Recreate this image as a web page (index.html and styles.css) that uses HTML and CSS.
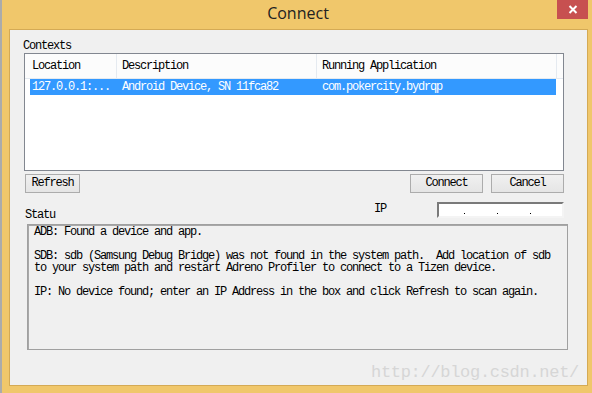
FILE: index.html
```html
<!DOCTYPE html>
<html>
<head>
<meta charset="utf-8">
<link rel="stylesheet" href="styles.css">
</head>
<body>
<div class="strip"></div>
<div class="window">
  <div class="titlebar">
    <div class="title">Connect</div>
    <div class="close">
      <svg width="10" height="9" viewBox="0 0 10 9"><path d="M1.5 1 L8.5 8 M8.5 1 L1.5 8" stroke="#fff" stroke-width="2" fill="none"/></svg>
    </div>
  </div>
  <div class="client">
    <div class="mono label-contexts">Contexts</div>
    <div class="list">
      <div class="lv-header">
        <div class="hcell h1 mono">Location</div>
        <div class="hcell h2 mono">Description</div>
        <div class="hcell h3 mono">Running Application</div>
        <div class="hfill"></div>
      </div>
      <div class="lv-row selected">
        <div class="cell r1 mono">127.0.0.1:...</div>
        <div class="cell r2 mono">Android Device, SN 11fca82</div>
        <div class="cell r3 mono">com.pokercity.bydrqp</div>
      </div>
    </div>
    <div class="btn-row">
      <button class="btn btn-refresh mono">Refresh</button>
      <div class="spacer"></div>
      <button class="btn btn-wide mono">Connect</button>
      <button class="btn btn-wide mono">Cancel</button>
    </div>
    <div class="ip-row">
      <div class="mono statu">Statu</div>
      <div class="spacer"></div>
      <div class="mono ip-label">IP</div>
      <div class="ip-box"><span class="dot"></span><span class="dot"></span><span class="dot"></span></div>
    </div>
    <div class="status mono">ADB: Found a device and app.

SDB: sdb (Samsung Debug Bridge) was not found in the system path.  Add location of sdb
to your system path and restart Adreno Profiler to connect to a Tizen device.

IP: No device found; enter an IP Address in the box and click Refresh to scan again.</div>
  </div>
  <div class="watermark">http://blog.csdn.net/</div>
</div>
</body>
</html>
```

FILE: styles.css
```css
html, body {
  margin: 0;
  padding: 0;
}
body {
  width: 592px;
  height: 393px;
  display: flex;
  background: #f0c76b;
  overflow: hidden;
}
.strip {
  width: 2px;
  background: #ababab;
}
.window {
  position: relative;
  flex: 1;
  display: flex;
  flex-direction: column;
  padding: 0 4px 7px 7px;
}
.titlebar {
  height: 29px;
  display: grid;
  grid-template-columns: 1fr auto 1fr;
  align-items: start;
  margin: 0 -4px 0 -7px;
  padding: 0 4px 0 6px;
}
.title {
  grid-column: 2;
  font-family: "Open Sans", sans-serif;
  font-size: 16px;
  line-height: 26px;
  color: #222;
}
.close {
  grid-column: 3;
  justify-self: end;
  width: 31px;
  height: 19px;
  background: #c75050;
  display: flex;
  align-items: center;
  justify-content: center;
}
.close svg { display: block; margin-left: 1px; }
.client {
  flex: 1;
  background: #f0f0f0;
  border: 1px solid #d4aa55;
  padding-left: 14px;
}
.mono {
  font-family: "Liberation Mono", monospace;
  font-size: 12px;
  letter-spacing: -1.2px;
  line-height: 12px;
  color: #000;
}
.label-contexts {
  margin-top: 10px;
  margin-left: -1px;
}
.list {
  margin-top: 1px;
  width: 538px;
  height: 116px;
  border: 1px solid #828790;
  background: #fff;
}
.lv-header {
  display: flex;
  height: 24px;
  border-bottom: 1px solid #e5eaf0;
  background: #fcfcfc;
}
.hcell {
  border-right: 1px solid #e5eaf0;
  padding-left: 6px;
  line-height: 24px;
  box-sizing: border-box;
}
.h1 { width: 92px; padding-left: 7px; }
.h2 { width: 200px; padding-left: 5px; }
.h3 { width: 240px; padding-left: 5px; }
.hfill { flex: 1; }
.lv-row {
  display: flex;
  margin-left: 5px;
  width: 526px;
  height: 16px;
}
.selected { background: #3399ff; }
.selected .cell { color: #fff; }
.cell {
  line-height: 16px;
  box-sizing: border-box;
  white-space: nowrap;
}
.r1 { width: 87px; padding-left: 2px; }
.r2 { width: 200px; padding-left: 5px; }
.r3 { flex: 1; padding-left: 5px; }
.btn-row {
  margin-top: 3px;
  width: 539px;
  padding-left: 1px;
  display: flex;
  gap: 8px;
}
.spacer { flex: 1; }
.btn {
  height: 19px;
  margin: 0;
  padding: 0;
  border: 1px solid #acacac;
  background: linear-gradient(#f0f0f0, #e5e5e5);
  line-height: 17px;
  text-align: center;
}
.btn-refresh { width: 55px; }
.btn-wide { width: 73px; }
.ip-row {
  margin-top: 9px;
  width: 540px;
  height: 19px;
  display: flex;
  align-items: flex-start;
}
.statu {
  margin-top: 7px;
  margin-left: 1px;
}
.ip-label {
  margin-right: 51px;
  line-height: 12px;
  margin-top: 1px;
}
.ip-box {
  width: 123px;
  height: 12px;
  background: #fff;
  border-top: 2px solid #7a7a7a;
  border-left: 2px solid #7a7a7a;
  border-right: 2px solid #f4f4f4;
  border-bottom: 2px solid #f4f4f4;
  display: flex;
  align-items: flex-start;
  padding-left: 25px;
  gap: 32px;
  box-sizing: content-box;
  width: 98px;
}
.dot {
  width: 1px;
  height: 1px;
  margin-top: 9px;
  background: #000;
}
.status {
  margin-top: 3px;
  margin-left: 3px;
  width: 533px;
  height: 123px;
  border: 1px solid #a0a0a0;
  box-shadow: inset 1px 1px 0 #a8a8a8;
  padding: 1px 0 0 6px;
  white-space: pre;
  color: #000;
}
.watermark {
  position: absolute;
  left: 369px;
  top: 364px;
  font-family: "Liberation Mono", monospace;
  font-size: 17px;
  letter-spacing: -0.3px;
  line-height: 17px;
  color: #d6d6d6;
}
```
